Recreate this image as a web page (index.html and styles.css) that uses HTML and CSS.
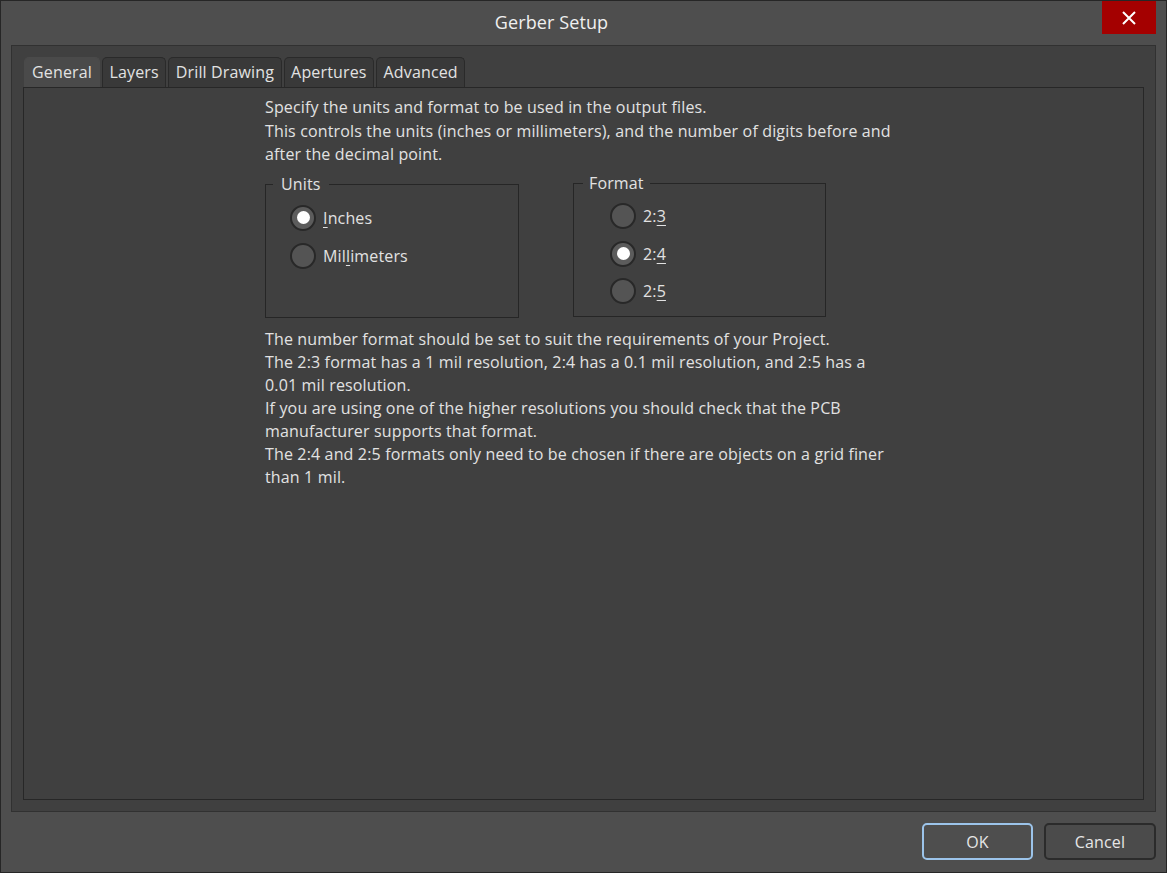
FILE: index.html
```html
<!DOCTYPE html>
<html>
<head>
<meta charset="utf-8">
<link rel="stylesheet" href="styles.css">
</head>
<body>
<div class="window">
  <div class="titlebar">
    <div class="title">Gerber Setup</div>
    <div class="close">
      <svg width="14" height="14" viewBox="0 0 14 14"><path d="M1 1 L13 13 M13 1 L1 13" stroke="#fff" stroke-width="2" fill="none"/></svg>
    </div>
  </div>
  <div class="panel">
    <div class="tabs">
      <div class="tab active">General</div>
      <div class="tab">Layers</div>
      <div class="tab">Drill Drawing</div>
      <div class="tab">Apertures</div>
      <div class="tab">Advanced</div>
    </div>
    <div class="pane">
      <div class="content">
        <p class="para">Specify the units and format to be used in the output files.<br>This controls the units (inches or millimeters), and the number of digits before and<br>after the decimal point.</p>
        <div class="groups">
          <div class="group units">
            <span class="legend">Units</span>
            <div class="radio-row"><span class="radio checked"></span><span class="label"><u>I</u>nches</span></div>
            <div class="radio-row"><span class="radio"></span><span class="label">Mil<u>l</u>imeters</span></div>
          </div>
          <div class="group format">
            <span class="legend">Format</span>
            <div class="radio-row"><span class="radio"></span><span class="label">2:<u>3</u></span></div>
            <div class="radio-row"><span class="radio checked"></span><span class="label">2:<u>4</u></span></div>
            <div class="radio-row"><span class="radio"></span><span class="label">2:<u>5</u></span></div>
          </div>
        </div>
        <p class="para notes">The number format should be set to suit the requirements of your Project.<br>The 2:3 format has a 1 mil resolution, 2:4 has a 0.1 mil resolution, and 2:5 has a<br>0.01 mil resolution.<br>If you are using one of the higher resolutions you should check that the PCB<br>manufacturer supports that format.<br>The 2:4 and 2:5 formats only need to be chosen if there are objects on a grid finer<br>than 1 mil.</p>
      </div>
    </div>
  </div>
  <div class="footer">
    <div class="btn ok">OK</div>
    <div class="btn">Cancel</div>
  </div>
</div>
</body>
</html>
```

FILE: styles.css
```css
* { box-sizing: border-box; }
html, body { margin: 0; padding: 0; background: #4d4d4d; }
body {
  font-family: "Open Sans", "Noto Sans", sans-serif;
  font-size: 16px;
  letter-spacing: 0.15px;
  color: #e2e2e2;
}
.window {
  width: 1167px;
  height: 873px;
  border: 1px solid #262626;
  background: #4e4e4e;
  display: flex;
  flex-direction: column;
}
.titlebar {
  height: 44px;
  display: flex;
  align-items: flex-start;
  padding-right: 10px;
}
.title {
  flex: 1;
  text-align: center;
  font-size: 18px;
  letter-spacing: 0.1px;
  line-height: 42px;
  color: #f0f0f0;
}
.close {
  width: 54px;
  height: 33px;
  background: #a40000;
  display: flex;
  align-items: center;
  justify-content: center;
}
.panel {
  margin: 0 10px;
  height: 767px;
  background: #404040;
  border: 1px solid #313131;
  padding: 11px;
  display: flex;
  flex-direction: column;
}
.tabs {
  display: flex;
  gap: 2px;
  padding-left: 1px;
  height: 30px;
}
.tab {
  height: 30px;
  padding: 0 6.5px;
  line-height: 28px;
  background: #393939;
  border: 1px solid #2a2a2a;
  border-bottom: none;
  border-radius: 5px 5px 0 0;
  color: #e2e2e2;
}
.tab.active {
  background: #4a4a4a;
  border-color: #4a4a4a;
  padding: 0 7px;
}
.pane {
  flex: 1;
  border: 1px solid #272727;
  background: #404040;
  padding: 8px 0 0 241px;
}
.content { width: 660px; }
.para {
  margin: 0;
  line-height: 23.5px;
}
.groups {
  display: flex;
  gap: 54px;
  margin-top: 16px;
  align-items: flex-start;
}
.group {
  position: relative;
  border: 1px solid #262626;
  height: 134px;
  padding-top: 14px;
}
.units { width: 254px; padding-left: 24px; margin-top: 1px; }
.format { width: 253px; padding-left: 36px; }
.legend {
  position: absolute;
  top: -12px;
  background: #404040;
  line-height: 22px;
}
.units .legend { left: 7px; padding: 0 8px; }
.format .legend { left: 9px; padding: 0 6px; }
.radio-row {
  display: flex;
  align-items: center;
  height: 38px;
  gap: 7px;
}
.format .radio-row { height: 37.5px; }
.radio {
  width: 26px;
  height: 26px;
  border-radius: 50%;
  border: 2px solid #282828;
  background: #545454;
  display: flex;
  align-items: center;
  justify-content: center;
}
.radio.checked { background: #5c5c5c; }
.radio.checked::after {
  content: "";
  width: 13px;
  height: 13px;
  border-radius: 50%;
  background: #ffffff;
}
.label u { text-underline-offset: 3px; }
.notes { margin-top: 10px; line-height: 23px; }
.footer {
  flex: 1;
  display: flex;
  justify-content: flex-end;
  align-items: flex-start;
  padding: 11px 10px 0 0;
  gap: 11px;
}
.btn {
  width: 112px;
  height: 37px;
  border: 2px solid #2b2b2b;
  border-radius: 5px;
  background: #4b4b4b;
  display: flex;
  align-items: center;
  justify-content: center;
  color: #e6e6e6;
}
.btn.ok {
  width: 111px;
  border-color: #9cc4ea;
  background: #4e4e4e;
}
```
